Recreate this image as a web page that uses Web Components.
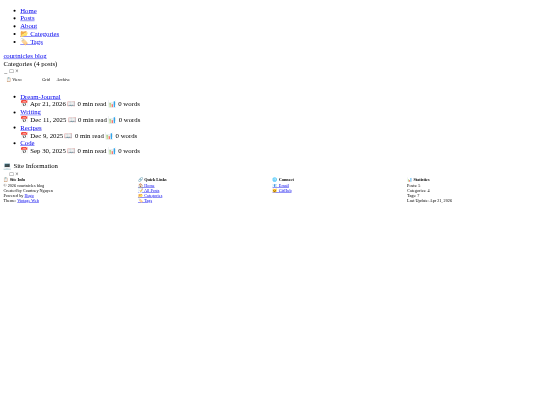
<!DOCTYPE html>
<html lang="en">
<head>
<meta charset="utf-8">
<title>courtnicles blog</title>
<style>
html, body { margin: 0; background: #fff; }
</style>
</head>
<body>
<page-frame>
<nav-list>
  <a href="#">Home</a>
  <a href="#">Posts</a>
  <a href="#">About</a>
  <a href="#">📂 Categories</a>
  <a href="#">🏷️ Tags</a>
</nav-list>
<blog-head title-text="courtnicles blog" sub="Categories (4 posts)"></blog-head>
<win-controls min></win-controls>
<view-bar></view-bar>
<post-list>
  <post-item name="Dream-Journal" date="Apr 21, 2026"></post-item>
  <post-item name="Writing" date="Dec 11, 2025"></post-item>
  <post-item name="Recipes" date="Dec 9, 2025"></post-item>
  <post-item name="Code" date="Sep 30, 2025"></post-item>
</post-list>
<site-info></site-info>
</page-frame>

<script>
// page is laid out at desktop width and shown at 540 wide
class PageFrame extends HTMLElement {
  connectedCallback() {
    this.attachShadow({ mode: "open" }).innerHTML = `<style>
      :host { display: block; width: 540px; height: 405px; overflow: hidden; font: 16px/18.4px "Liberation Serif", "Noto Color Emoji", serif; color: #000; }
      .desk { display: flow-root; box-sizing: border-box; width: 1280px; height: 960px; padding: 0 8px; transform: scale(.421875); transform-origin: 0 0; filter: blur(.8px); }
    </style><div class="desk"><slot></slot></div>`;
  }
}

class NavList extends HTMLElement {
  connectedCallback() {
    const root = this.attachShadow({ mode: "open" });
    const items = [...this.children].map(a => `<li>${a.outerHTML}</li>`).join("");
    this.textContent = "";
    root.innerHTML = `<style>
      :host { display: block; margin: 16px 0; }
      ul { margin: 0; padding: 0 0 0 40px; }
    </style><ul>${items}</ul>`;
  }
}

class BlogHead extends HTMLElement {
  connectedCallback() {
    this.attachShadow({ mode: "open" }).innerHTML = `<style>
      :host { display: block; }
    </style><div><a href="#">${this.getAttribute("title-text")}</a></div><div>${this.getAttribute("sub")}</div>`;
  }
}

class WinControls extends HTMLElement {
  connectedCallback() {
    const hide = this.hasAttribute("min") ? "" : "visibility:hidden";
    this.attachShadow({ mode: "open" }).innerHTML = `<style>
      :host { display: flex; gap: 6px; height: 17px; align-items: center; padding-left: 2px; font-size: 14px; line-height: 15px; color: #222; }
      span { display: block; width: 7px; }
    </style><span style="${hide}">_</span><span>□</span><span>×</span>`;
  }
}

class ViewBar extends HTMLElement {
  connectedCallback() {
    this.attachShadow({ mode: "open" }).innerHTML = `<style>
      :host { display: flex; align-items: center; height: 25px; padding-left: 6px; font-size: 10px; line-height: 12px; }
      span { display: block; }
      .view { width: 86px; }
      .grid { width: 34px; }
    </style><span class="view">📋 View:</span><span class="grid">Grid</span><span>Archive</span>`;
  }
}

class PostList extends HTMLElement {
  connectedCallback() {
    this.attachShadow({ mode: "open" }).innerHTML = `<style>
      :host { display: block; margin: 17px 0 18px; padding-left: 40px; }
    </style><slot></slot>`;
  }
}

class PostItem extends HTMLElement {
  connectedCallback() {
    this.attachShadow({ mode: "open" }).innerHTML = `<style>
      :host { display: list-item; }
    </style><div><a href="#">${this.getAttribute("name")}</a></div>
    <div>📅 ${this.getAttribute("date")} 📖 0 min read 📊 0 words</div>`;
  }
}

class FootCol extends HTMLElement {
  connectedCallback() {
    this.attachShadow({ mode: "open" }).innerHTML = `<style>
      :host { display: block; font-size: 10px; line-height: 11.5px; }
      h4 { margin: 0 0 2px; font-size: 10px; line-height: 11.5px; font-weight: bold; }
    </style><h4>${this.getAttribute("heading")}</h4><slot></slot>`;
  }
}

class SiteInfo extends HTMLElement {
  connectedCallback() {
    const link = t => `<div><a href="#">${t}</a></div>`;
    this.attachShadow({ mode: "open" }).innerHTML = `<style>
      :host { display: block; }
      .cols { display: grid; grid-template-columns: repeat(4, 1fr); gap: 12px; }
    </style>
    <div>💻 Site Information</div>
    <win-controls></win-controls>
    <div class="cols">
      <foot-col heading="📋 Site Info">
        <div>© 2026 courtnicles blog</div>
        <div>Created by Courtney Nguyen</div>
        <div>Powered by <a href="#">Hugo</a></div>
        <div>Theme: <a href="#">Vintage Web</a></div>
      </foot-col>
      <foot-col heading="🔗 Quick Links">
        ${link("🏠 Home")}${link("📝 All Posts")}${link("📂 Categories")}${link("🏷️ Tags")}
      </foot-col>
      <foot-col heading="🌐 Connect">
        ${link("📧 Email")}${link("🐱 GitHub")}
      </foot-col>
      <foot-col heading="📊 Statistics">
        <div>Posts: 5</div>
        <div>Categories: 4</div>
        <div>Tags: 7</div>
        <div>Last Update: Apr 21, 2026</div>
      </foot-col>
    </div>`;
  }
}

customElements.define("page-frame", PageFrame);
customElements.define("win-controls", WinControls);
customElements.define("foot-col", FootCol);
customElements.define("nav-list", NavList);
customElements.define("blog-head", BlogHead);
customElements.define("view-bar", ViewBar);
customElements.define("post-list", PostList);
customElements.define("post-item", PostItem);
customElements.define("site-info", SiteInfo);
</script>
</body>
</html>
